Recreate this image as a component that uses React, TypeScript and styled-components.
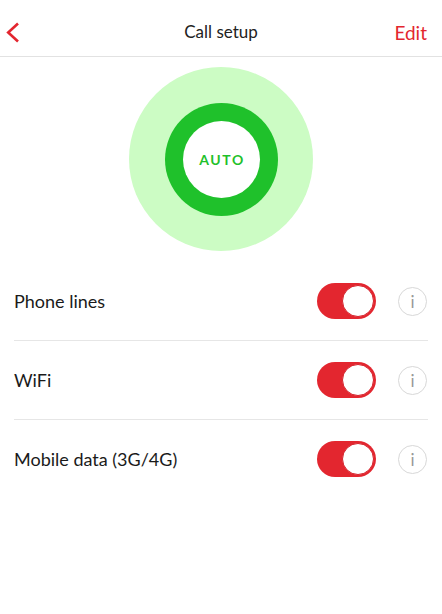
import React from 'react';
import styled, { createGlobalStyle } from 'styled-components';

const GlobalStyle = createGlobalStyle`
  body {
    margin: 0;
    background: #fff;
    font-family: Lato, "Open Sans", sans-serif;
  }
`;

const rows = [
  { id: 1, label: 'Phone lines', on: true },
  { id: 2, label: 'WiFi', on: true },
  { id: 3, label: 'Mobile data (3G/4G)', on: true },
];

function App() {
  return (
    <Page>
      <GlobalStyle />
      <Header>
        <BackButton aria-label="Back">
          <svg width="15" height="21" viewBox="0 0 15 21">
            <path d="M13 1.5 L3.2 10.5 L13 19.5" fill="none" stroke="#e3262f" strokeWidth="2.6" />
          </svg>
        </BackButton>
        <Title>Call setup</Title>
        <EditButton>Edit</EditButton>
      </Header>

      <Hero>
        <Halo>
          <Ring>
            <Core>AUTO</Core>
          </Ring>
        </Halo>
      </Hero>

      <List>
        {rows.map((row) => (
          <Row key={row.id}>
            <Label>{row.label}</Label>
            <Toggle on={row.on}>
              <Knob />
            </Toggle>
            <Info>i</Info>
          </Row>
        ))}
      </List>
    </Page>
  );
}

const Page = styled.div`
  width: 442px;
  min-height: 614px;
  background: #fff;
`;

const Header = styled.header`
  height: 48px;
  padding-top: 8px;
  display: flex;
  align-items: center;
  justify-content: space-between;
  border-bottom: 1px solid #e2e2e2;
  position: relative;
`;

const BackButton = styled.div`
  width: 40px;
  display: flex;
  align-items: center;
  padding-left: 5px;
  padding-top: 1px;
`;

const Title = styled.h1`
  position: absolute;
  left: 0;
  right: 0;
  top: 8px;
  height: 48px;
  line-height: 48px;
  margin: 0;
  text-align: center;
  font-size: 17px;
  font-weight: 400;
  color: #222;
  pointer-events: none;
`;

const EditButton = styled.div`
  padding-right: 15px;
  font-size: 19px;
  color: #e3262f;
`;

const Hero = styled.section`
  display: flex;
  justify-content: center;
  padding-top: 10px;
  padding-bottom: 11px;
`;

const Halo = styled.div`
  width: 184px;
  height: 184px;
  border-radius: 50%;
  background: #ccfcc4;
  display: flex;
  align-items: center;
  justify-content: center;
`;

const Ring = styled.div`
  width: 113px;
  height: 113px;
  border-radius: 50%;
  background: #1fc12b;
  display: flex;
  align-items: center;
  justify-content: center;
`;

const Core = styled.div`
  width: 77px;
  height: 77px;
  border-radius: 50%;
  background: #fff;
  display: flex;
  align-items: center;
  justify-content: center;
  color: #1fc12b;
  font-size: 14px;
  font-weight: 700;
  letter-spacing: 1.6px;
  padding-left: 2px;
  box-sizing: border-box;
`;

const List = styled.div`
  padding: 0 14px;
`;

const Row = styled.div`
  height: 78px;
  display: flex;
  align-items: center;
  border-bottom: 1.5px solid #e6e6e6;
  &:last-child {
    border-bottom: none;
  }
`;

const Label = styled.span`
  flex: 1;
  font-size: 18px;
  color: #1a1a1a;
`;

const Toggle = styled.div<{ on: boolean }>`
  width: 59px;
  height: 36px;
  border-radius: 18px;
  background: ${(p) => (p.on ? '#e3262f' : '#ddd')};
  display: flex;
  align-items: center;
  justify-content: ${(p) => (p.on ? 'flex-end' : 'flex-start')};
  padding: 0 2px;
  box-sizing: border-box;
  margin-right: 22px;
`;

const Knob = styled.div`
  width: 32px;
  height: 32px;
  border-radius: 50%;
  background: #fff;
  border: 1.5px solid #d6222b;
  box-sizing: border-box;
`;

const Info = styled.div`
  width: 29px;
  height: 29px;
  border-radius: 50%;
  border: 1.5px solid #d8d8d8;
  box-sizing: border-box;
  display: flex;
  align-items: center;
  justify-content: center;
  color: #999;
  font-size: 17px;
  margin-right: 1px;
`;

export default App;
